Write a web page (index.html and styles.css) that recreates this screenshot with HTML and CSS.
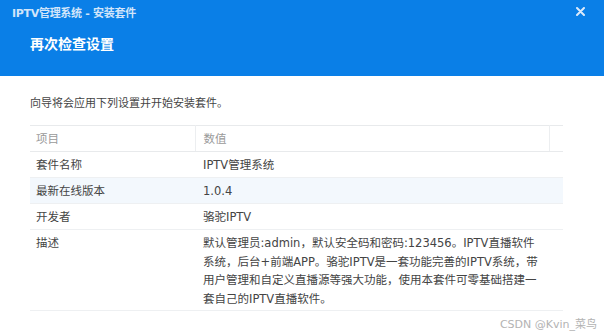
FILE: index.html
```html
<!DOCTYPE html>
<html lang="zh-CN">
<head>
<meta charset="utf-8">
<title>IPTV管理系统 - 安装套件</title>
<meta name="viewport" content="width=device-width,initial-scale=1">
<link rel="stylesheet" href="styles.css">
</head>
<body>
<div class="dialog">
  <div class="dialog-head">
    <div class="titlebar">
      <span class="app-title">IPTV管理系统 - 安装套件</span>
      <span class="close" aria-label="关闭">
        <svg width="9" height="9" viewBox="0 0 9 9"><path d="M1 1L8 8M8 1L1 8" stroke="#dbeafb" stroke-width="2" stroke-linecap="round"/></svg>
      </span>
    </div>
    <h2>再次检查设置</h2>
  </div>

  <div class="dialog-body">
    <p class="intro">向导将会应用下列设置并开始安装套件。</p>

    <table class="summary">
      <colgroup>
        <col class="c-key"><col class="c-val"><col class="c-pad">
      </colgroup>
      <thead>
        <tr><th>项目</th><th>数值</th><th></th></tr>
      </thead>
      <tbody>
        <tr><td>套件名称</td><td>IPTV管理系统</td><td></td></tr>
        <tr class="alt"><td>最新在线版本</td><td>1.0.4</td><td></td></tr>
        <tr><td>开发者</td><td>骆驼IPTV</td><td></td></tr>
        <tr class="desc"><td>描述</td><td>默认管理员:admin，默认安全码和密码:123456。IPTV直播软件<br>系统，后台+前端APP。骆驼IPTV是一套功能完善的IPTV系统，带<br>用户管理和自定义直播源等强大功能，使用本套件可零基础搭建一<br>套自己的IPTV直播软件。</td><td></td></tr>
      </tbody>
    </table>

    <div class="watermark">CSDN @Kvin_菜鸟</div>
  </div>
</div>
</body>
</html>
```

FILE: styles.css
```css
body{margin:0;background:#fff;color:#444;font-family:"DejaVu Sans","Noto Sans CJK SC",sans-serif;font-size:11px}

.dialog-head{background:#0a7fe7;height:76px;box-sizing:border-box}
.titlebar{display:flex;justify-content:space-between;align-items:center;padding:4px 19px 0 12px;height:15px}
.app-title{font-size:11px;font-weight:700;color:#d2e5fa;letter-spacing:-.3px}
.close{display:flex;align-items:center}
.dialog-head h2{margin:0;padding:15px 0 0 30px;font-size:14px;font-weight:700;color:#fff;line-height:20px}

.dialog-body{padding:0 41px 0 30px}
.intro{margin:20px 0 13px;line-height:16px;color:#444}

.summary{width:100%;border-collapse:collapse;table-layout:fixed;line-height:16px;font-size:11.5px}
.c-key{width:165px}
.c-pad{width:14px}
.summary th{font-weight:400;color:#9a9a9a;text-align:left;padding:5px 6px 4px;height:16px;
  border-top:1px solid #e8eaec;border-bottom:1px solid #e8eaec;border-right:1px solid #eceef0}
.summary th:last-child{border-right:0}
.summary td{padding:5px 6px 4px 6px;height:16px;border-bottom:1px solid #eef0f2;vertical-align:top;color:#444}
.summary td:nth-child(2){padding-left:8px;padding-right:0;white-space:nowrap;overflow:visible}
.summary th:nth-child(2){padding-left:8px}
.summary tr.alt td{background:#f3f8fd}
.summary tr.desc td{line-height:18.7px;padding-top:4px;padding-bottom:1px}

.watermark{text-align:right;color:#b3b3b3;font-size:11px;margin:7px -34px 0 0;line-height:14px}
```
